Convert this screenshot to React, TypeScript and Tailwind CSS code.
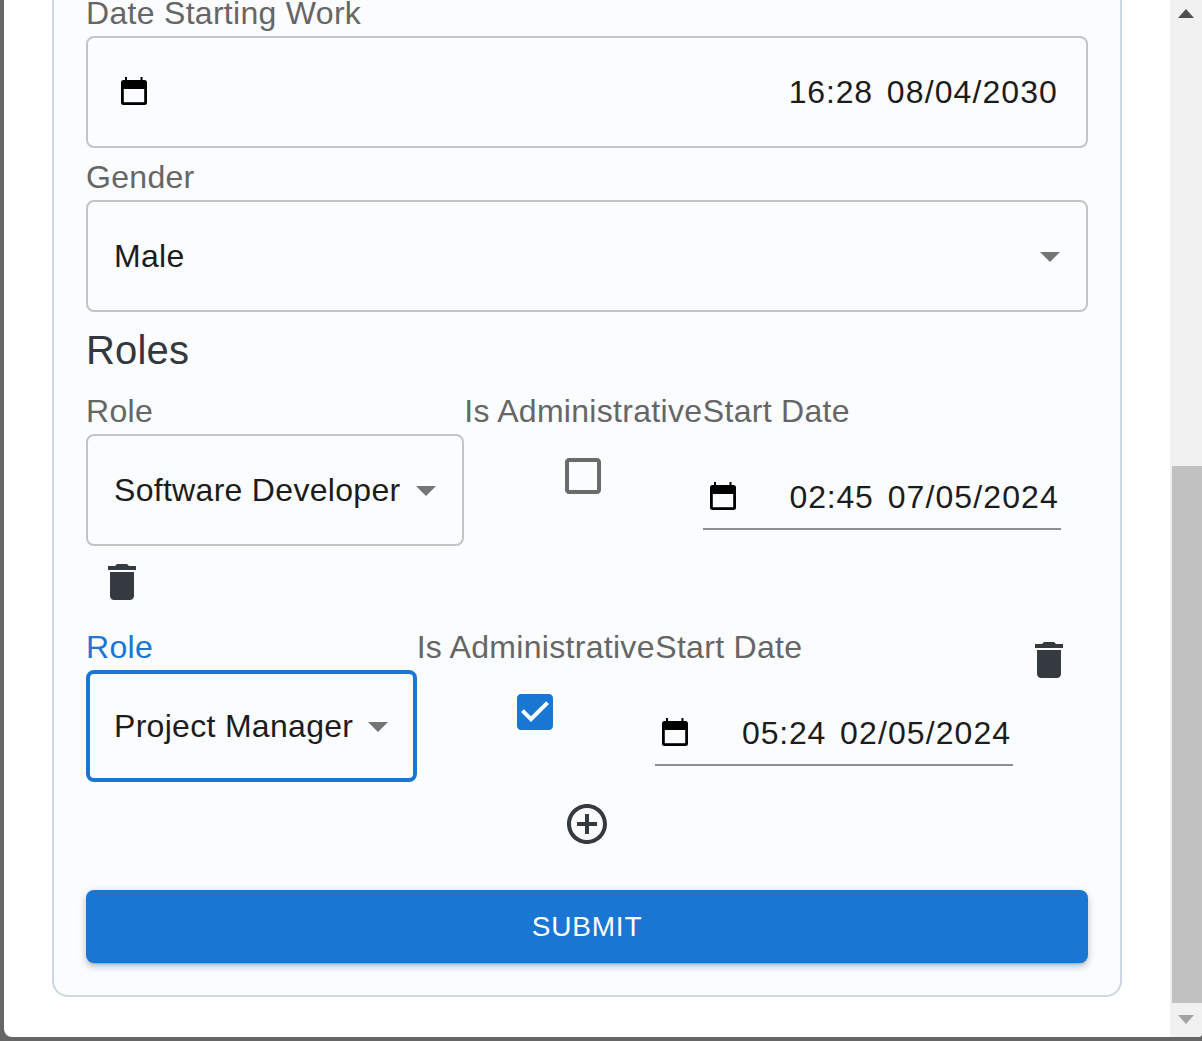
import React from 'react'

const CalendarIcon: React.FC = () => (
  <svg width="26" height="28" viewBox="0 0 26 28" className="mb-[2px] shrink-0 text-black">
    <path d="M4 0h2v3h13.500V0h2v3h2A2.500 2.500 0 0 1 26 5.500v20a2.500 2.500 0 0 1-2.500 2.500h-21A2.500 2.500 0 0 1 0 25.500v-20A2.500 2.500 0 0 1 2.500 3H4V0z" fill="currentColor" />
    <rect x="2.800" y="12" width="20.400" height="13.200" fill="#fbfcfe" />
  </svg>
)

const SelectArrow: React.FC = () => (
  <svg width="20" height="10" viewBox="0 0 20 10" className="mt-[2px] shrink-0 text-[#757575]">
    <path d="M0 0h20L10 10z" fill="currentColor" />
  </svg>
)

const TrashButton: React.FC = () => (
  <button className="flex h-[72px] w-[72px] shrink-0 items-center justify-center text-[#343a40]">
    <svg width="48" height="48" viewBox="0 0 24 24" fill="currentColor">
      <path d="M6 19c0 1.100.9 2 2 2h8c1.100 0 2-.9 2-2V7H6v12zM19 4h-3.500l-1-1h-5l-1 1H5v2h14V4z" />
    </svg>
  </button>
)

const FieldLabel: React.FC<{ children: React.ReactNode; active?: boolean }> = ({ children, active }) => (
  <div className={`h-[46px] text-[32px] leading-[46px] tracking-[0.3px] whitespace-nowrap ${active ? 'text-[#1976d2]' : 'text-[#666666]'}`}>
    {children}
  </div>
)

const DateValue: React.FC<{ time: string; date: string }> = ({ time, date }) => (
  <span className="flex gap-[14px] text-[32px] leading-[46px] tracking-[1.100px] text-[#1c1c1c] whitespace-nowrap">
    <span className="tracking-[0.800px]">{time}</span>
    <span>{date}</span>
  </span>
)

const RoleRow: React.FC<{
  role: string
  checked?: boolean
  focused?: boolean
  time: string
  date: string
}> = ({ role, checked, focused, time, date }) => (
  <div className="flex flex-wrap items-start">
    <div>
      <FieldLabel active={focused}>Role</FieldLabel>
      <div
        className={`flex h-[112px] items-center rounded-lg text-[32px] tracking-[0.3px] text-[#1c1c1c] whitespace-nowrap ${
          focused ? 'gap-[15px] border-4 border-[#1976d2] pl-[24px] pr-[24.400px]' : 'gap-[16px] border-2 border-[#c4c4c4] pl-[26px] pr-[25.800px]'
        }`}
      >
        {role}
        <SelectArrow />
      </div>
    </div>
    <div className="flex w-[238.600px] flex-col">
      <FieldLabel>Is Administrative</FieldLabel>
      <div className="flex h-[84px] items-center justify-center pr-[2px]">
        {checked ? (
          <svg width="48" height="48" viewBox="0 0 24 24" fill="#1976d2">
            <path d="M19 3H5c-1.110 0-2 .9-2 2v14c0 1.100.89 2 2 2h14c1.110 0 2-.9 2-2V5c0-1.100-.89-2-2-2zm-9 14l-5-5 1.410-1.410L10 14.170l7.590-7.590L19 8l-9 9z" />
          </svg>
        ) : (
          <svg width="48" height="48" viewBox="0 0 24 24" fill="#6b6b6b">
            <path d="M19 5v14H5V5h14m0-2H5c-1.100 0-2 .9-2 2v14c0 1.100.9 2 2 2h14c1.100 0 2-.9 2-2V5c0-1.100-.9-2-2-2z" />
          </svg>
        )}
      </div>
    </div>
    <div className="w-[358px]">
      <FieldLabel>Start Date</FieldLabel>
      <div className="mt-[32px] flex h-[64px] items-center justify-between border-b-2 border-[#8f8f8f] pl-[7px] pr-[2px]">
        <CalendarIcon />
        <DateValue time={time} date={date} />
      </div>
    </div>
    <TrashButton />
  </div>
)

export default function App() {
  return (
    <div className="h-[1041px] w-[1202px] overflow-hidden bg-[#666666] pb-[4px] pl-[4px] font-['Liberation_Sans',Arial,sans-serif]">
      <div className="flex h-full overflow-hidden rounded-bl-lg rounded-br bg-white">
        <main className="min-w-0 flex-1 overflow-hidden pl-[48px] pr-[48px]">
          <div className="-mt-[10px] flex flex-col rounded-b-2xl border-2 border-t-0 border-[#cdd8e5] bg-[#fbfcfe] px-[32px] pb-[32px]">
            <FieldLabel>Date Starting Work</FieldLabel>
            <div className="flex h-[112px] items-center justify-between rounded-lg border-2 border-[#c4c4c4] pl-[33px] pr-[28px]">
              <CalendarIcon />
              <DateValue time="16:28" date="08/04/2030" />
            </div>
            <div className="mt-[6px]">
              <FieldLabel>Gender</FieldLabel>
              <div className="flex h-[112px] items-center justify-between rounded-lg border-2 border-[#c4c4c4] pl-[26px] pr-[26px] text-[32px] tracking-[0.3px] text-[#1c1c1c]">
                Male
                <SelectArrow />
              </div>
            </div>
            <h2 className="h-[76px] text-[40px] leading-[76px] tracking-[0.2px] text-[#32383e]">Roles</h2>
            <div className="flex flex-col gap-[6px]">
              <RoleRow role="Software Developer" time="02:45" date="07/05/2024" />
              <RoleRow role="Project Manager" checked focused time="05:24" date="02/05/2024" />
            </div>
            <div className="mt-[6px] flex justify-center">
              <button className="flex h-[72px] w-[72px] items-center justify-center text-[#343a40]">
                <svg width="48" height="48" viewBox="0 0 24 24" fill="currentColor">
                  <path d="M13 7h-2v4H7v2h4v4h2v-4h4v-2h-4V7zm-1-5C6.480 2 2 6.480 2 12s4.480 10 10 10 10-4.480 10-10S17.520 2 12 2zm0 18c-4.410 0-8-3.590-8-8s3.590-8 8-8 8 3.590 8 8-3.590 8-8 8z" />
                </svg>
              </button>
            </div>
            <button className="mt-[30px] h-[73px] rounded-lg bg-[#1976d2] text-[28px] tracking-[0.8px] text-white shadow-[0_3px_2px_-2px_rgba(0,0,0,0.2),0_4px_6px_0_rgba(0,0,0,0.14),0_2px_10px_0_rgba(0,0,0,0.12)]">
              SUBMIT
            </button>
          </div>
        </main>
        <aside className="flex w-[32px] shrink-0 flex-col bg-[#f1f1f1]">
          <div className="flex h-[26px] items-start justify-center pt-[9px]">
            <svg width="16" height="9" viewBox="0 0 16 9"><path d="M8 0l8 9H0z" fill="#505050" /></svg>
          </div>
          <div className="mt-[440px] ml-[2px] h-[537px] bg-[#c1c1c1]" />
          <div className="flex flex-1 items-start justify-center pt-[12px]">
            <svg width="16" height="9" viewBox="0 0 16 9"><path d="M0 0h16L8 9z" fill="#a3a3a3" /></svg>
          </div>
        </aside>
      </div>
    </div>
  )
}
